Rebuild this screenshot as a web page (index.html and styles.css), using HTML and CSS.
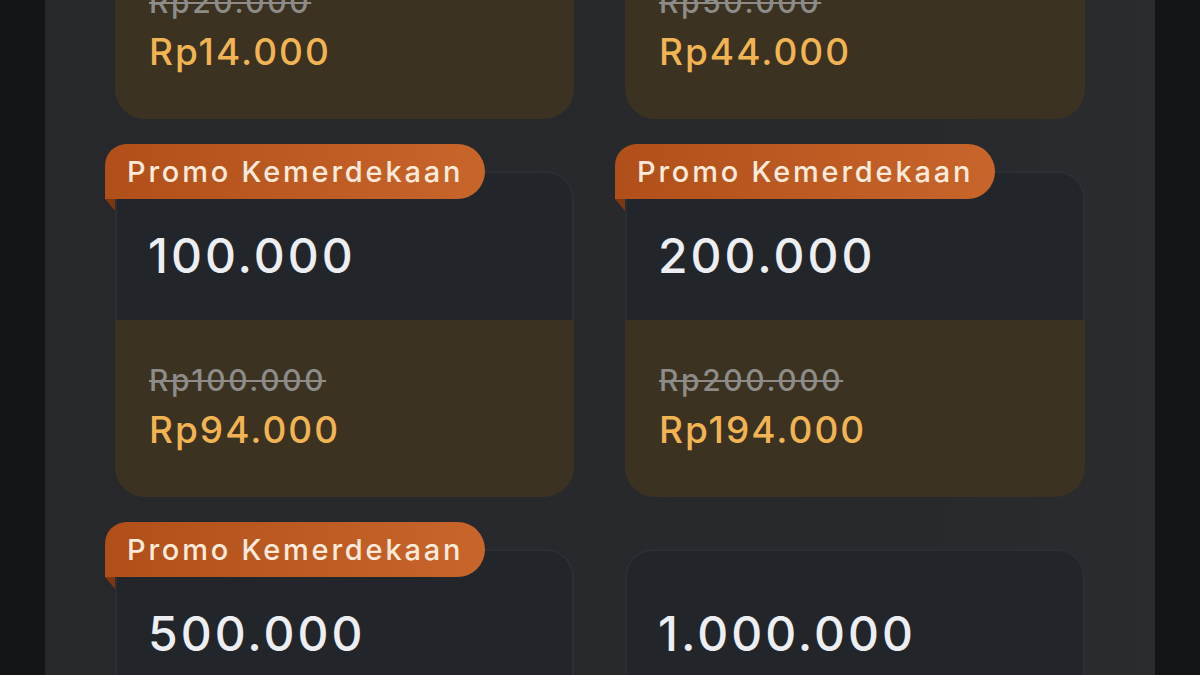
FILE: index.html
```html
<!DOCTYPE html>
<html lang="id">
<head>
    <meta charset="UTF-8">
    <meta name="viewport" content="width=device-width, initial-scale=1.0">
    <title>Top Up - Promo Kemerdekaan</title>
    <link rel="stylesheet" href="styles.css">
</head>
<body>
    <div class="screen">
        <div class="product-grid">
            <div class="card">
                <div class="card-top">
                    <span class="amount">20.000</span>
                </div>
                <div class="card-bottom">
                    <s class="old-price">Rp20.000</s>
                    <span class="price">Rp14.000</span>
                </div>
            </div>
            <div class="card">
                <div class="card-top">
                    <span class="amount">50.000</span>
                </div>
                <div class="card-bottom">
                    <s class="old-price">Rp50.000</s>
                    <span class="price">Rp44.000</span>
                </div>
            </div>

            <div class="card">
                <span class="badge">Promo Kemerdekaan</span>
                <div class="card-top">
                    <span class="amount">100.000</span>
                </div>
                <div class="card-bottom">
                    <s class="old-price">Rp100.000</s>
                    <span class="price">Rp94.000</span>
                </div>
            </div>
            <div class="card">
                <span class="badge">Promo Kemerdekaan</span>
                <div class="card-top">
                    <span class="amount">200.000</span>
                </div>
                <div class="card-bottom">
                    <s class="old-price">Rp200.000</s>
                    <span class="price">Rp194.000</span>
                </div>
            </div>

            <div class="card">
                <span class="badge">Promo Kemerdekaan</span>
                <div class="card-top">
                    <span class="amount">500.000</span>
                </div>
                <div class="card-bottom">
                    <s class="old-price">Rp500.000</s>
                    <span class="price">Rp494.000</span>
                </div>
            </div>
            <div class="card">
                <div class="card-top">
                    <span class="amount">1.000.000</span>
                </div>
                <div class="card-bottom">
                    <span class="price">Rp1.000.000</span>
                </div>
            </div>
        </div>
    </div>
</body>
</html>
```

FILE: styles.css
```css
:root {
    --bg-outer: #141517;
    --bg-screen: #27292d;
    --bg-card: #222529;
    --border-card: #2b2e32;
    --bg-price: #3b3222;
    --text-amount: #eceef1;
    --text-old: #8d8c88;
    --text-price: #f2b452;
    --badge-start: #b14f1a;
    --badge-end: #c8652b;
    --badge-fold: #7e3510;
    --badge-text: #fdeadb;
}

* {
    margin: 0;
    padding: 0;
    box-sizing: border-box;
}

body {
    background-color: var(--bg-outer);
    font-family: Inter, "Noto Sans", sans-serif;
    height: 675px;
    overflow: hidden;
}

.screen {
    width: 1110px;
    height: 675px;
    margin-left: 45px;
    background: linear-gradient(90deg, #26282c 0%, #27292d 80%, #2a2c30 100%);
    overflow: hidden;
    padding: 0 70px;
}

/* grille des produits, la premiere ligne est coupee en haut */
.product-grid {
    display: grid;
    grid-template-columns: 459px 460px;
    column-gap: 51px;
    row-gap: 52px;
    margin-top: -207px;
}

.card {
    position: relative;
    display: flex;
    flex-direction: column;
}

.card-top {
    height: 149px;
    background-color: var(--bg-card);
    border: 2px solid var(--border-card);
    border-bottom: none;
    border-radius: 28px 28px 0 0;
    padding: 59px 0 0 31px;
}

.amount {
    display: block;
    color: var(--text-amount);
    font-size: 48px;
    font-weight: 500;
    line-height: 1;
    letter-spacing: 3px;
}

.card-bottom {
    height: 177px;
    background-color: var(--bg-price);
    border-radius: 0 0 30px 30px;
    padding: 44px 0 0 34px;
    display: flex;
    flex-direction: column;
}

.old-price {
    color: var(--text-old);
    font-size: 30px;
    font-weight: 500;
    line-height: 32px;
    letter-spacing: 2.6px;
    text-decoration-thickness: 2px;
}

.price {
    color: var(--text-price);
    font-size: 37px;
    font-weight: 500;
    line-height: 48px;
    letter-spacing: 2px;
    margin-top: 10px;
}

.badge {
    position: absolute;
    top: -27px;
    left: -10px;
    height: 55px;
    padding: 0 22px 0 22px;
    display: flex;
    align-items: center;
    background: linear-gradient(90deg, var(--badge-start), var(--badge-end));
    border-radius: 22px 28px 28px 0;
    color: var(--badge-text);
    font-size: 29px;
    font-weight: 500;
    letter-spacing: 2.8px;
    white-space: nowrap;
    z-index: 2;
}

.badge::after {
    content: "";
    position: absolute;
    left: 0;
    top: 55px;
    border-top: 12px solid var(--badge-fold);
    border-left: 10px solid transparent;
}
```
